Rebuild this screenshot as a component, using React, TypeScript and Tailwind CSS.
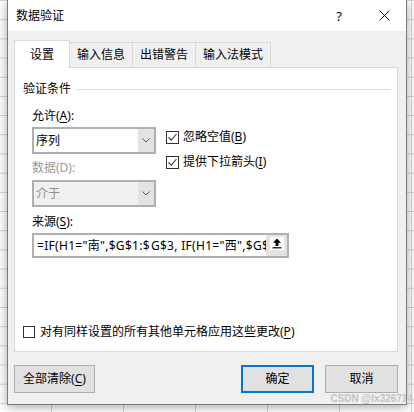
import React from "react";

const FONT = "font-['Noto_Sans','Noto_Sans_CJK_SC',sans-serif]";

function Chevron() {
  return (
    <svg width="8" height="5" viewBox="0 0 8 5" fill="none">
      <path d="M0.5 0.5 L4 4 L7.5 0.5" stroke="#5a5a5a" strokeWidth="1" />
    </svg>
  );
}

function Select({ value, disabled }: { value: string; disabled?: boolean }) {
  return (
    <div
      className={`flex h-[27px] w-[124px] border-2 border-[#b0b0b0] ${
        disabled ? "bg-[#f0f0f0] text-[#8f8f8f]" : "bg-white text-black"
      }`}
    >
      <div className="flex flex-1 items-center pl-[2px] text-[12px] leading-[16px]">{value}</div>
      <div className="flex w-[16px] items-center justify-center bg-[#e3e3e3]">
        <Chevron />
      </div>
    </div>
  );
}

function Check({ checked }: { checked?: boolean }) {
  return (
    <div className="flex h-[13px] w-[13px] items-center justify-center border border-[#333333] bg-white">
      {checked && (
        <svg width="11" height="11" viewBox="0 0 11 11" fill="none">
          <path d="M1.5 5.5 L4.2 8.2 L9.5 2" stroke="#3c3c3c" strokeWidth="1.1" />
        </svg>
      )}
    </div>
  );
}

function Tab({ label, active }: { label: string; active?: boolean }) {
  if (active) {
    return (
      <div className="flex h-[28px] items-center border-x border-t border-[#d9d9d9] bg-white px-[15px] text-[12px]">
        {label}
      </div>
    );
  }
  return (
    <div className="flex h-[26px] items-center border-y border-r border-[#d9d9d9] bg-[#f0f0f0] px-[7px] text-[12px]">
      {label}
    </div>
  );
}

export default function App() {
  return (
    <div
      className={`relative h-[412px] w-[414px] overflow-hidden bg-white bg-[linear-gradient(to_right,#d4d4d4_1px,transparent_1px),linear-gradient(to_bottom,#d4d4d4_1px,transparent_1px)] bg-[size:72px_19.2px] bg-[position:51px_0px,0px_0px] ${FONT} text-black`}
    >
      <div className="ml-[7px] flex h-[405px] w-[400px] flex-col border-x border-b border-[#7a7a7a] bg-[#f0f0f0] shadow-[0_2px_10px_rgba(0,0,0,0.35)]">
        {/* title bar */}
        <div className="flex h-[31px] items-center bg-white pl-[8px]">
          <span className="text-[12px] leading-[16px]">数据验证</span>
          <span className="ml-auto w-[46px] text-center text-[13px] leading-[16px]">?</span>
          <div className="flex w-[44px] items-center justify-center">
            <svg width="11" height="11" viewBox="0 0 11 11" fill="none">
              <path d="M0.5 0.5 L10.5 10.5 M10.5 0.5 L0.5 10.5" stroke="#111" strokeWidth="1" />
            </svg>
          </div>
        </div>

        {/* body */}
        <div className="flex flex-1 flex-col pl-[6px] pt-[9px]">
          <div className="relative z-10 -mb-px flex h-[28px] items-end">
            <Tab label="设置" active />
            <Tab label="输入信息" />
            <Tab label="出错警告" />
            <Tab label="输入法模式" />
          </div>

          <div className="flex h-[285px] w-[384px] flex-col border border-[#d9d9d9] bg-white text-[12px] leading-[16px]">
            <div className="mt-[13px] flex h-[16px] items-center pl-[8px] pr-[6px]">
              <span>验证条件</span>
              <div className="ml-[5px] h-px flex-1 bg-[#dcdcdc]" />
            </div>

            <div className="flex flex-col pl-[17px]">
              <div className="mt-[11px] h-[16px]">
                允许(<span className="underline underline-offset-2">A</span>):
              </div>
              <div className="flex">
                <div className="flex w-[124px] flex-col">
                  <div className="mt-[3px]">
                    <Select value="序列" />
                  </div>
                  <div className="mt-[6px] h-[16px] text-[#9a9a9a]">数据(D):</div>
                  <div className="mt-[4px]">
                    <Select value="介于" disabled />
                  </div>
                </div>
                <div className="ml-[10px] flex flex-col gap-[9px] pt-[5px]">
                  <div className="flex h-[16px] items-center gap-[4px]">
                    <Check checked />
                    <span>
                      忽略空值(<span className="underline underline-offset-2">B</span>)
                    </span>
                  </div>
                  <div className="flex h-[16px] items-center gap-[4px]">
                    <Check checked />
                    <span>
                      提供下拉箭头(<span className="underline underline-offset-2">I</span>)
                    </span>
                  </div>
                </div>
              </div>

              <div className="mt-[7px] h-[16px]">
                来源(<span className="underline underline-offset-2">S</span>):
              </div>
              <div className="mt-[3px] flex h-[25px] w-[257px] border-2 border-[#b0b0b0] bg-white">
                <div className="flex flex-1 items-center overflow-hidden whitespace-nowrap pl-[3px] tracking-[0.3px]">
                  <span>=IF(H1="南",$G$1:$</span>
                  <span className="mx-[0.5px] inline-block h-[15px] w-px bg-black" />
                  <span>G$3, IF(H1="西",$G$</span>
                </div>
                <div className="flex w-[21px] items-start justify-center bg-[#e3e3e3] pt-[2px]">
                  <div className="flex h-[13px] w-[14px] items-center justify-center bg-white">
                    <svg width="10" height="11" viewBox="0 0 10 11">
                      <path d="M5 0.5 L9 4.8 H6.4 V8 H3.6 V4.8 H1 Z" fill="#000" />
                      <rect x="0.5" y="9.2" width="9" height="1.2" fill="#000" />
                    </svg>
                  </div>
                </div>
              </div>
            </div>

            <div className="mt-[66px] flex h-[16px] items-center gap-[5px] pl-[8px]">
              <div className="h-[12px] w-[12px] border border-[#333333] bg-white" />
              <span>
                对有同样设置的所有其他单元格应用这些更改(<span className="underline underline-offset-2">P</span>)
              </span>
            </div>
          </div>

          <div className="mt-[13px] flex w-[384px] text-[12px] leading-[16px]">
            <button className="flex h-[28px] w-[81px] items-center justify-center border border-[#adadad] bg-[#e1e1e1]">
              全部清除(<span className="underline underline-offset-2">C</span>)
            </button>
            <button className="ml-auto flex h-[28px] w-[73px] items-center justify-center border-2 border-[#0078d7] bg-[#e1e1e1]">
              确定
            </button>
            <button className="ml-[11px] flex h-[28px] w-[73px] items-center justify-center border border-[#adadad] bg-[#e1e1e1]">
              取消
            </button>
          </div>
        </div>
      </div>

      <div className="absolute bottom-[7px] right-[1px] font-['Liberation_Sans',sans-serif] text-[10px] font-bold leading-[12px] text-[#c4c4c4]">
        CSDN @lx326714
      </div>
    </div>
  );
}
